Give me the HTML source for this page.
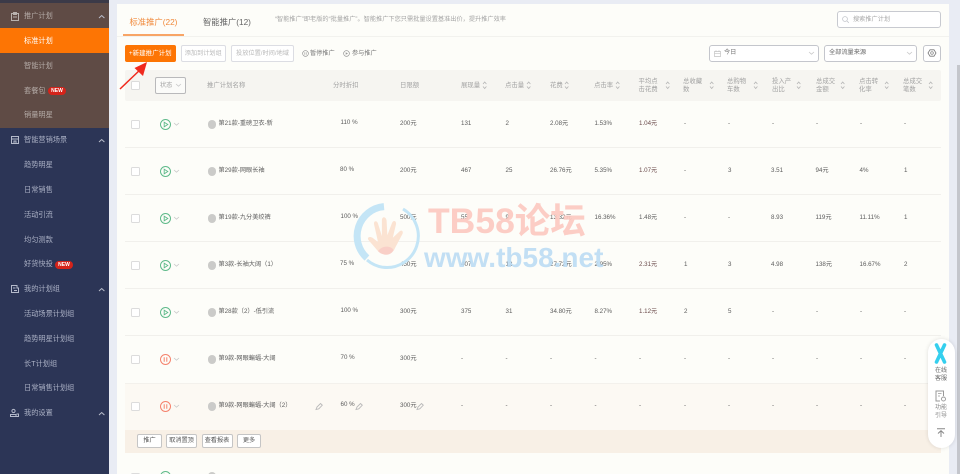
<!DOCTYPE html>
<html lang="zh"><head><meta charset="utf-8"><title>推广计划</title>
<style>
html,body{margin:0;padding:0;width:960px;height:474px;overflow:hidden;background:#e9ecf4}
#w{position:relative;width:960px;height:474px;overflow:hidden;font-family:"Liberation Sans","Noto Sans CJK SC",sans-serif;font-size:6.2px;color:#5c5c5c;filter:blur(.35px)}
.a{position:absolute}
.t{position:absolute;white-space:nowrap;line-height:10px}
.s{color:#aab0c4;left:24px;font-size:7.2px}
.cb{position:absolute;left:131px;width:7px;height:7px;border:1px solid #dcdcdc;border-radius:1.5px;background:#fff}
.hd{color:#a3a3a3;font-size:6.4px}
.h2{color:#a3a3a3;font-size:6.4px;line-height:8px;top:78px}
.l{position:absolute;left:125px;width:816px;height:1px;background:#f1f0ec}
.btn{position:absolute;box-sizing:border-box;border:1px solid #dcdde3;border-radius:2px;background:#fff;text-align:center;white-space:nowrap}
.ab{top:434px;height:14px;line-height:12px;border-color:#c5c5c5;color:#555}
svg{position:absolute;overflow:visible}
.dot{position:absolute;left:207.5px;width:8.5px;height:8.5px;border-radius:50%;background:#cbcbc9}
</style></head><body><div id="w">
<svg width="0" height="0" style="position:absolute"><defs>
<g id="srt"><path d="M0 3 L1.7 1 L3.4 3 M0 5.5 L1.7 7.5 L3.4 5.5" fill="none" stroke="#b5b5b5" stroke-width=".8"/></g>
<g id="play"><circle cx="5.5" cy="5.5" r="5" fill="none" stroke="#5fba8a" stroke-width="1"/><path d="M4.2 3.2 L7.8 5.5 L4.2 7.8Z" fill="none" stroke="#5fba8a" stroke-width=".9"/></g>
<g id="pause"><circle cx="5.5" cy="5.5" r="5" fill="none" stroke="#f5826c" stroke-width="1"/><path d="M4.2 3.3V7.7M6.8 3.3V7.7" fill="none" stroke="#f5826c" stroke-width="1"/></g>
<g id="chev"><path d="M0 0 L2.5 2.2 L5 0" fill="none" stroke="#c9c9c9" stroke-width=".8"/></g>
<g id="up"><path d="M0 3 L2.7 .5 L5.4 3" fill="none" stroke="#b9bdcb" stroke-width="1"/></g>
<g id="pen"><path d="M0 6.5 L1 4 L4.5 .5 L6.3 2.2 L2.8 5.8Z" fill="none" stroke="#b9b9b9" stroke-width=".9"/></g>
</defs></svg>

<!-- sidebar -->
<div class="a" style="left:0;top:0;width:108.5px;height:474px;background:#2c3556"></div>
<div class="a" style="left:0;top:3px;width:108.5px;height:125px;background:#5f4b45"></div>
<div class="a" style="left:0;top:0;width:108.5px;height:3px;background:#3b3a48"></div>
<div class="a" style="left:0;top:28px;width:108.5px;height:25px;background:#fd7504"></div>

<div class="t s" style="top:11px;color:#b5aca8">推广计划</div>
<div class="t s" style="top:36px;color:#fff">标准计划</div>
<div class="t s" style="top:61px;color:#b5aca8">智能计划</div>
<div class="t s" style="top:86px;color:#b5aca8">套餐包</div>
<div class="a" style="left:48px;top:87px;width:18px;height:8px;border-radius:4px;background:#d4231a;color:#fff;font-size:5px;font-weight:bold;line-height:8px;text-align:center">NEW</div>
<div class="t s" style="top:110px;color:#b5aca8">销量明星</div>
<div class="t s" style="top:135px">智能营销场景</div>
<div class="t s" style="top:160px">趋势明星</div>
<div class="t s" style="top:185px">日常销售</div>
<div class="t s" style="top:210px">活动引流</div>
<div class="t s" style="top:235px">均匀测款</div>
<div class="t s" style="top:259px">好货快投</div>
<div class="a" style="left:55px;top:261px;width:18px;height:8px;border-radius:4px;background:#d4231a;color:#fff;font-size:5px;font-weight:bold;line-height:8px;text-align:center">NEW</div>
<div class="t s" style="top:284px">我的计划组</div>
<div class="t s" style="top:309px">活动场景计划组</div>
<div class="t s" style="top:334px">趋势明星计划组</div>
<div class="t s" style="top:359px">长T计划组</div>
<div class="t s" style="top:383px">日常销售计划组</div>
<div class="t s" style="top:408px">我的设置</div>

<svg style="left:11px;top:12px" width="8" height="9"><rect x=".5" y="1.5" width="7" height="7" fill="none" stroke="#b9b2ae"/><path d="M2.5 .5H5.5V2.5H2.5ZM2 5H6" fill="none" stroke="#b9b2ae" stroke-width=".9"/></svg>
<svg style="left:11px;top:136px" width="8" height="8"><path d="M.5 .5H7.5V7.5H.5ZM.5 3H7.5M3 5H5V7.5H3Z" fill="none" stroke="#b5bacb"/></svg>
<svg style="left:11px;top:285px" width="8" height="8"><path d="M.5 .5H6V3H7.5V7.5H.5ZM2 3H4.5M3 5.5H6" fill="none" stroke="#b5bacb"/></svg>
<svg style="left:10px;top:409px" width="9" height="8"><circle cx="3.5" cy="2" r="1.6" fill="none" stroke="#b5bacb"/><path d="M.5 7.5V5.5H6V7.5ZM6.5 5H8.5V7.5H6.5" fill="none" stroke="#b5bacb"/></svg>
<svg style="left:99px;top:15px" width="6" height="4"><use href="#up"/></svg>
<svg style="left:99px;top:139px" width="6" height="4"><use href="#up"/></svg>
<svg style="left:99px;top:288px" width="6" height="4"><use href="#up"/></svg>
<svg style="left:99px;top:412px" width="6" height="4"><use href="#up"/></svg>

<!-- panel -->
<div class="a" style="left:117px;top:4px;width:832px;height:470px;background:#fdfdf9"></div>
<div class="a" style="left:957px;top:65px;width:3px;height:409px;background:#c4c6cc"></div>

<div class="t" style="left:129.5px;top:17px;font-size:8.3px;color:#f18a3c">标准推广(22)</div>
<div class="t" style="left:203px;top:17px;font-size:8.3px;color:#666">智能推广(12)</div>
<div class="a" style="left:123px;top:34px;width:61px;height:1.5px;background:#f8a566"></div>
<div class="a" style="left:117px;top:36px;width:832px;height:1px;background:#f2f2ee"></div>
<div class="t" style="left:275px;top:15px;font-size:6.2px;color:#a5a5a5">“智能推广”即老版的“批量推广”。智能推广下您只需批量设置基准出价，提升推广效率</div>

<div class="btn" style="left:837px;top:11px;width:104px;height:17px;border-color:#c8cad0;border-radius:3px"></div>
<svg style="left:842px;top:16px" width="7" height="7"><circle cx="3" cy="3" r="2.4" fill="none" stroke="#c2c4ca" stroke-width=".8"/><path d="M5 5 L6.8 6.8" stroke="#c2c4ca" stroke-width=".8"/></svg>
<div class="t" style="left:853px;top:15px;color:#a8a8a8">搜索推广计划</div>

<div class="a" style="left:125px;top:45px;width:50.5px;height:17px;background:#fd7504;border-radius:2px;color:#fff;text-align:center;line-height:17px;font-size:6.5px">+新建推广计划</div>
<div class="btn" style="left:180.5px;top:45px;width:45.5px;height:17px;line-height:15px;color:#b9b9b9">添加到计划组</div>
<div class="btn" style="left:231px;top:45px;width:63px;height:17px;line-height:15px;color:#b9b9b9">投放位置/时间/地域</div>
<svg style="left:302px;top:50px" width="7" height="7"><circle cx="3.5" cy="3.5" r="2.9" fill="none" stroke="#999" stroke-width=".7"/><path d="M2.8 2.3V4.7M4.2 2.3V4.7" stroke="#999" stroke-width=".6"/></svg>
<div class="t" style="left:310px;top:49px;color:#777">暂停推广</div>
<svg style="left:343px;top:50px" width="7" height="7"><circle cx="3.5" cy="3.5" r="2.9" fill="none" stroke="#999" stroke-width=".7"/><path d="M2.7 2.2L5 3.5 2.7 4.8Z" fill="#999"/></svg>
<div class="t" style="left:352px;top:49px;color:#777">参与推广</div>

<div class="btn" style="left:709px;top:45px;width:110px;height:17px;border-color:#c4c6cc;border-radius:3px"></div>
<svg style="left:714px;top:50px" width="7" height="7"><path d="M.5 1.5H6.5V6.5H.5ZM.5 3.3H6.5M2 .3V2M5 .3V2" fill="none" stroke="#c2c2c2" stroke-width=".7"/></svg>
<div class="t" style="left:724px;top:48px;color:#777">今日</div>
<svg style="left:809px;top:52px" width="5" height="3"><use href="#chev"/></svg>
<div class="btn" style="left:824px;top:45px;width:93px;height:17px;border-color:#c4c6cc;border-radius:3px"></div>
<div class="t" style="left:829px;top:48px;color:#666">全部流量来源</div>
<svg style="left:907px;top:52px" width="5" height="3"><use href="#chev"/></svg>
<div class="btn" style="left:922.5px;top:45px;width:18.5px;height:17px;border-color:#c4c6cc;border-radius:3px"></div>
<svg style="left:928px;top:49px" width="8" height="8"><circle cx="4" cy="4" r="1.3" fill="none" stroke="#777" stroke-width=".7"/><path d="M2 .8H6L8 4 6 7.2H2L0 4Z" fill="none" stroke="#777" stroke-width=".8"/></svg>

<!-- table head -->
<div class="a" style="left:125px;top:70px;width:816px;height:31px;background:#f6f5f1;border-radius:2px"></div>
<div class="cb" style="top:81px"></div>
<div class="btn" style="left:155px;top:77px;width:31px;height:17px;border-color:#b9b9bb;background:#fbfbf9;line-height:15px;text-align:left;padding-left:4px;color:#a3a3a3">状态</div>
<svg style="left:176px;top:84px" width="5" height="3"><use href="#chev"/></svg>
<div class="t hd" style="left:207px;top:81px">推广计划名称</div>
<div class="t hd" style="left:333px;top:81px">分时折扣</div>
<div class="t hd" style="left:400px;top:81px">日限额</div>
<div class="t hd" style="left:461px;top:81px">展现量</div><svg style="left:483px;top:81px" width="4" height="8"><use href="#srt"/></svg>
<div class="t hd" style="left:505px;top:81px">点击量</div><svg style="left:527px;top:81px" width="4" height="8"><use href="#srt"/></svg>
<div class="t hd" style="left:550px;top:81px">花费</div><svg style="left:565px;top:81px" width="4" height="8"><use href="#srt"/></svg>
<div class="t hd" style="left:594px;top:81px">点击率</div><svg style="left:616px;top:81px" width="4" height="8"><use href="#srt"/></svg>
<div class="t h2" style="left:638.5px">平均点<br>击花费</div><svg style="left:666px;top:81px" width="4" height="8"><use href="#srt"/></svg>
<div class="t h2" style="left:683px">总收藏<br>数</div><svg style="left:710px;top:81px" width="4" height="8"><use href="#srt"/></svg>
<div class="t h2" style="left:727px">总购物<br>车数</div><svg style="left:754px;top:81px" width="4" height="8"><use href="#srt"/></svg>
<div class="t h2" style="left:772px">投入产<br>出比</div><svg style="left:797px;top:81px" width="4" height="8"><use href="#srt"/></svg>
<div class="t h2" style="left:816px">总成交<br>金额</div><svg style="left:841px;top:81px" width="4" height="8"><use href="#srt"/></svg>
<div class="t h2" style="left:859px">点击转<br>化率</div><svg style="left:885px;top:81px" width="4" height="8"><use href="#srt"/></svg>
<div class="t h2" style="left:903px">总成交<br>笔数</div><svg style="left:929px;top:81px" width="4" height="8"><use href="#srt"/></svg>

<!-- separators and row 7 -->
<div class="l" style="top:147px"></div><div class="l" style="top:194px"></div><div class="l" style="top:241px"></div><div class="l" style="top:288px"></div><div class="l" style="top:335px"></div>
<div class="a" style="left:125px;top:383px;width:816px;height:47px;background:#fcf9f3;border-top:1px solid #f3f1ec;box-sizing:border-box"></div>
<div class="a" style="left:125px;top:430px;width:816px;height:23px;background:#f8f0e6"></div>

<!-- row 1 -->
<div class="cb" style="top:120px"></div><svg style="left:160px;top:119px" width="11" height="11"><use href="#play"/></svg><svg style="left:174px;top:123px" width="5" height="3"><use href="#chev"/></svg><div class="dot" style="top:120px"></div>
<div class="t" style="left:218.5px;top:119px">第21款-重磅卫衣-新</div><div class="t" style="left:340.5px;top:118px">110 %</div><div class="t" style="left:400px;top:119px">200元</div><div class="t" style="left:461px;top:119px">131</div><div class="t" style="left:505.5px;top:119px">2</div><div class="t" style="left:550px;top:119px">2.08元</div><div class="t" style="left:594.5px;top:119px">1.53%</div><div class="t" style="left:639px;top:119px;color:#6b4b4b">1.04元</div><div class="t" style="left:684px;top:119px">-</div><div class="t" style="left:728px;top:119px">-</div><div class="t" style="left:772px;top:119px">-</div><div class="t" style="left:816px;top:119px">-</div><div class="t" style="left:860px;top:119px">-</div><div class="t" style="left:904px;top:119px">-</div>
<!-- row 2 -->
<div class="cb" style="top:167px"></div><svg style="left:160px;top:166px" width="11" height="11"><use href="#play"/></svg><svg style="left:174px;top:170px" width="5" height="3"><use href="#chev"/></svg><div class="dot" style="top:167px"></div>
<div class="t" style="left:218.5px;top:166px">第29款-网眼长袖</div><div class="t" style="left:340px;top:165px">80 %</div><div class="t" style="left:400px;top:166px">200元</div><div class="t" style="left:461px;top:166px">467</div><div class="t" style="left:505.5px;top:166px">25</div><div class="t" style="left:550px;top:166px">26.76元</div><div class="t" style="left:594.5px;top:166px">5.35%</div><div class="t" style="left:639px;top:166px;color:#6b4b4b">1.07元</div><div class="t" style="left:684px;top:166px">-</div><div class="t" style="left:728px;top:166px">3</div><div class="t" style="left:771px;top:166px">3.51</div><div class="t" style="left:815.5px;top:166px">94元</div><div class="t" style="left:859.5px;top:166px">4%</div><div class="t" style="left:904px;top:166px">1</div>
<!-- row 3 -->
<div class="cb" style="top:214px"></div><svg style="left:160px;top:213px" width="11" height="11"><use href="#play"/></svg><svg style="left:174px;top:217px" width="5" height="3"><use href="#chev"/></svg><div class="dot" style="top:214px"></div>
<div class="t" style="left:218.5px;top:213px">第19款-九分美绞裤</div><div class="t" style="left:340.5px;top:212px">100 %</div><div class="t" style="left:400px;top:213px">500元</div><div class="t" style="left:461px;top:213px">55</div><div class="t" style="left:505.5px;top:213px">9</div><div class="t" style="left:550px;top:213px">13.32元</div><div class="t" style="left:594.5px;top:213px">16.36%</div><div class="t" style="left:639px;top:213px">1.48元</div><div class="t" style="left:684px;top:213px">-</div><div class="t" style="left:728px;top:213px">-</div><div class="t" style="left:771px;top:213px">8.93</div><div class="t" style="left:815.5px;top:213px">119元</div><div class="t" style="left:859.5px;top:213px">11.11%</div><div class="t" style="left:904px;top:213px">1</div>
<!-- row 4 -->
<div class="cb" style="top:261px"></div><svg style="left:160px;top:260px" width="11" height="11"><use href="#play"/></svg><svg style="left:174px;top:264px" width="5" height="3"><use href="#chev"/></svg><div class="dot" style="top:261px"></div>
<div class="t" style="left:218.5px;top:260px">第3款-长袖大阔（1）</div><div class="t" style="left:340px;top:259px">75 %</div><div class="t" style="left:400px;top:260px">450元</div><div class="t" style="left:461px;top:260px">407</div><div class="t" style="left:505.5px;top:260px">12</div><div class="t" style="left:550px;top:260px">27.72元</div><div class="t" style="left:594.5px;top:260px">2.95%</div><div class="t" style="left:639px;top:260px;color:#6b4b4b">2.31元</div><div class="t" style="left:684px;top:260px">1</div><div class="t" style="left:728px;top:260px">3</div><div class="t" style="left:771px;top:260px">4.98</div><div class="t" style="left:815.5px;top:260px">138元</div><div class="t" style="left:859.5px;top:260px">16.67%</div><div class="t" style="left:904px;top:260px">2</div>
<!-- row 5 -->
<div class="cb" style="top:308px"></div><svg style="left:160px;top:307px" width="11" height="11"><use href="#play"/></svg><svg style="left:174px;top:311px" width="5" height="3"><use href="#chev"/></svg><div class="dot" style="top:308px"></div>
<div class="t" style="left:218.5px;top:307px">第28款（2）-低引流</div><div class="t" style="left:340.5px;top:306px">100 %</div><div class="t" style="left:400px;top:307px">300元</div><div class="t" style="left:461px;top:307px">375</div><div class="t" style="left:505.5px;top:307px">31</div><div class="t" style="left:550px;top:307px">34.80元</div><div class="t" style="left:594.5px;top:307px">8.27%</div><div class="t" style="left:639px;top:307px;color:#6b4b4b">1.12元</div><div class="t" style="left:684px;top:307px">2</div><div class="t" style="left:728px;top:307px">5</div><div class="t" style="left:772px;top:307px">-</div><div class="t" style="left:816px;top:307px">-</div><div class="t" style="left:860px;top:307px">-</div><div class="t" style="left:904px;top:307px">-</div>
<!-- row 6 -->
<div class="cb" style="top:355px"></div><svg style="left:160px;top:354px" width="11" height="11"><use href="#pause"/></svg><svg style="left:174px;top:358px" width="5" height="3"><use href="#chev"/></svg><div class="dot" style="top:355px"></div>
<div class="t" style="left:218.5px;top:354px">第9款-网眼蝙蝠-大阔</div><div class="t" style="left:340.5px;top:353px">70 %</div><div class="t" style="left:400px;top:354px">300元</div><div class="t" style="left:461px;top:354px">-</div><div class="t" style="left:505.5px;top:354px">-</div><div class="t" style="left:550px;top:354px">-</div><div class="t" style="left:594.5px;top:354px">-</div><div class="t" style="left:639px;top:354px">-</div><div class="t" style="left:684px;top:354px">-</div><div class="t" style="left:728px;top:354px">-</div><div class="t" style="left:772px;top:354px">-</div><div class="t" style="left:816px;top:354px">-</div><div class="t" style="left:860px;top:354px">-</div><div class="t" style="left:904px;top:354px">-</div>
<!-- row 7 -->
<div class="cb" style="top:402px"></div><svg style="left:160px;top:401px" width="11" height="11"><use href="#pause"/></svg><svg style="left:174px;top:405px" width="5" height="3"><use href="#chev"/></svg><div class="dot" style="top:402px"></div>
<div class="t" style="left:218.5px;top:401px">第9款-网眼蝙蝠-大阔（2）</div><svg style="left:316px;top:403px" width="7" height="7"><use href="#pen"/></svg><div class="t" style="left:340.5px;top:400px">60 %</div><svg style="left:356px;top:403px" width="7" height="7"><use href="#pen"/></svg><div class="t" style="left:400px;top:401px">300元</div><svg style="left:417px;top:403px" width="7" height="7"><use href="#pen"/></svg><div class="t" style="left:461px;top:401px">-</div><div class="t" style="left:505.5px;top:401px">-</div><div class="t" style="left:550px;top:401px">-</div><div class="t" style="left:594.5px;top:401px">-</div><div class="t" style="left:639px;top:401px">-</div><div class="t" style="left:684px;top:401px">-</div><div class="t" style="left:728px;top:401px">-</div><div class="t" style="left:772px;top:401px">-</div><div class="t" style="left:816px;top:401px">-</div><div class="t" style="left:860px;top:401px">-</div><div class="t" style="left:904px;top:401px">-</div>
<div class="btn ab" style="left:137px;width:25px">推广</div>
<div class="btn ab" style="left:166px;width:31px">取消置顶</div>
<div class="btn ab" style="left:201.5px;width:31px">查看报表</div>
<div class="btn ab" style="left:237px;width:24px">更多</div>
<!-- row 8 peek -->
<div class="cb" style="top:473px"></div><svg style="left:160px;top:471px" width="11" height="11"><use href="#play"/></svg><div class="dot" style="top:472px"></div>

<!-- watermark -->
<svg style="left:352px;top:202px" width="72" height="72" viewBox="0 0 72 72">
<path d="M32 4.6 A29.5 29.5 0 0 0 15 56" fill="none" stroke="#c4e5f6" stroke-width="7"/>
<path d="M51 7 A31.5 31.5 0 0 1 31 65.3 M31 65.3 A31.5 31.5 0 0 1 15 58" fill="none" stroke="#c4e5f6" stroke-width="3"/>
<g transform="translate(6.5,8.4) scale(.78,.83)">
<path d="M25 49 L13 36 C10 32 15 31 18 33 L25 38 L20 17 C19 12 24 12 25 16 L30 31 L30 12 C30 7 35 7 36 12 L37 30 L43 15 C45 11 49 13 48 17 L44 33 L53 25 C56 23 58 26 56 29 L47 45 C44 53 32 56 25 49Z" fill="#fbe3d2"/>
<path d="M25 49 C30 42 42 42 45 48 C41 55 31 55 25 49Z" fill="#f9cfc7"/>
</g>
</svg>
<div class="t" style="left:428px;top:201px;font-size:35.5px;line-height:40px;font-weight:bold;color:#fcc9c1;opacity:.92">TB58论坛</div>
<div class="t" style="left:424px;top:243px;font-size:28px;line-height:30px;font-weight:bold;color:#bcdcf4;opacity:.9">www.tb58.net</div>

<!-- arrow -->
<svg style="left:118px;top:60px" width="32" height="32"><path d="M2 29 L24 8" stroke="#f02a1e" stroke-width="1.5"/><path d="M29 2 L16.5 8 L25 16Z" fill="#f02a1e"/></svg>

<!-- float widget -->
<div class="a" style="left:928px;top:339px;width:27px;height:109px;background:#fff;border-radius:14px;box-shadow:0 0 4px rgba(0,0,0,.12)"></div>
<svg style="left:934px;top:343px" width="13" height="21"><path d="M2.5 2 L10.5 19 M10.5 2 L2.5 19" stroke="#35cfee" stroke-width="3.6" stroke-linecap="round"/></svg>
<div class="t" style="left:935px;top:367px;font-size:6px;line-height:8px;color:#666">在线<br>客服</div>
<svg style="left:935px;top:390px" width="12" height="12"><path d="M8.5 6V1H1V11H5" fill="none" stroke="#999" stroke-width="1"/><path d="M3 3.5H6.5M3 6H5" stroke="#999" stroke-width=".8"/><circle cx="8.5" cy="9" r="2" fill="none" stroke="#999" stroke-width=".9"/></svg>
<div class="t" style="left:935px;top:404px;font-size:6px;line-height:8px;color:#8a8a8a">功能<br>引导</div>
<svg style="left:936px;top:428px" width="10" height="10"><path d="M1 .7H9M5 9V3M2 5.5 L5 2.7 L8 5.5" fill="none" stroke="#888" stroke-width="1"/></svg>
</div></body></html>
